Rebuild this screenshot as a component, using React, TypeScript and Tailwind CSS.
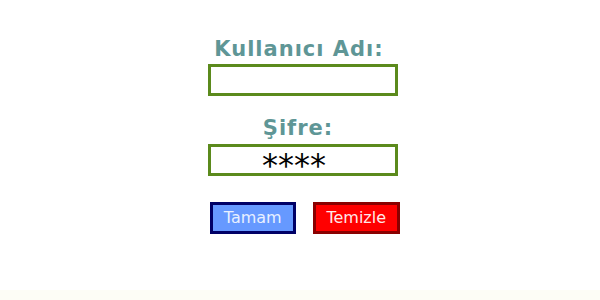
import React from 'react';

const labelCls =
  "text-[21px] font-bold leading-[24px] tracking-[1px] text-[#5f9696] font-['DejaVu_Sans',Verdana,sans-serif]";

const App: React.FC = () => {
  return (
    <div className="w-[600px] h-[300px] bg-white flex flex-col overflow-hidden">
      <div className="flex-1 pt-[37px] ml-[208px] w-[192px] flex flex-col">
        <div className={`${labelCls} text-center pr-[10px] whitespace-nowrap`}>Kullanıcı Adı:</div>
        <div className="mt-[3px] h-[32px] w-[190px] border-[3px] border-[#5b8a1c] bg-white" />

        <div className={`${labelCls} text-center pr-[12px] mt-[20px]`}>Şifre:</div>
        <div className="mt-[4px] h-[32px] w-[190px] border-[3px] border-[#5b8a1c] bg-white flex items-center pl-[51px] text-[32px] leading-none text-black font-['DejaVu_Sans',sans-serif]">
          <span className="mt-[10px]">****</span>
        </div>

        <div className="mt-[26px] flex gap-[17px] pl-[2px]">
          <button className="w-[86px] h-[32px] border-[3px] border-[#000066] bg-[#6699ff] text-[#e8f0ff] text-[16px] font-['DejaVu_Sans',Verdana,sans-serif]">
            Tamam
          </button>
          <button className="w-[88px] h-[32px] border-[3px] border-[#8a0000] bg-[#ff0000] text-[#ffe8e8] text-[16px] font-['DejaVu_Sans',Verdana,sans-serif]">
            Temizle
          </button>
        </div>
      </div>
      <div className="h-[10px] bg-[#fdfdf6]" />
    </div>
  );
};

export default App;
